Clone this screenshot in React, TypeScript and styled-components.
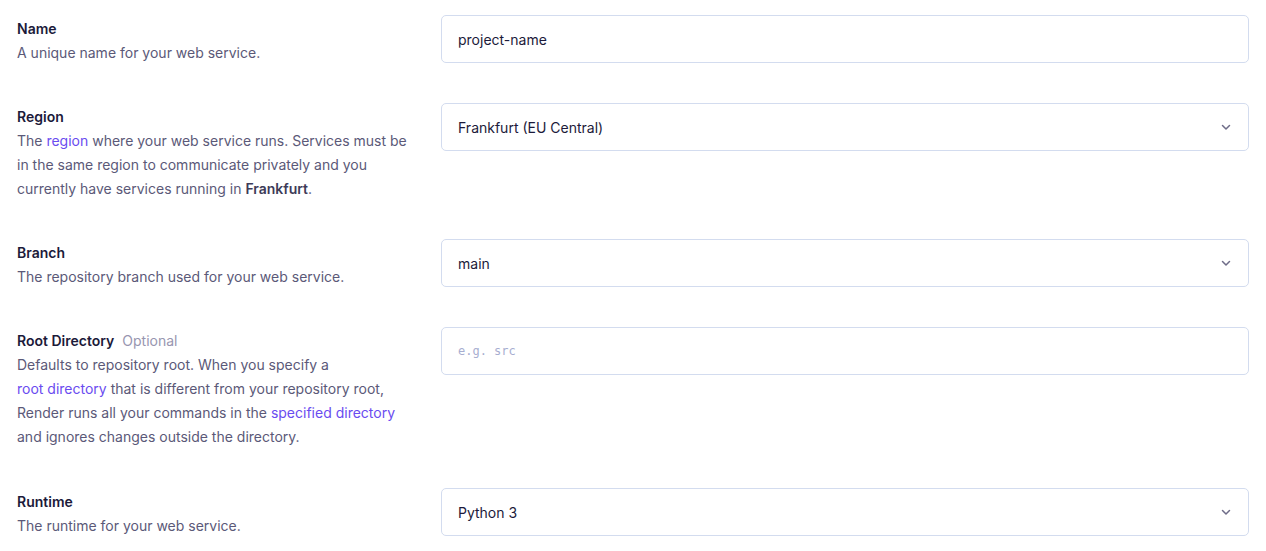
import React from "react";
import styled, { createGlobalStyle } from "styled-components";

const Global = createGlobalStyle`
  html, body { margin: 0; padding: 0; background: #ffffff; }
  body { font-family: "Inter", "Noto Sans", sans-serif; -webkit-font-smoothing: antialiased; }
  * { box-sizing: border-box; }
`;

const Page = styled.div`
  padding: 15px 17px 0 17px;
  display: flex;
  flex-direction: column;
  gap: 39px;
`;

const Row = styled.div`
  display: grid;
  grid-template-columns: 424px 808px;
  align-items: start;
`;

const Info = styled.div<{ $extra?: number }>`
  padding-top: 2px;
  margin-bottom: ${(p) => (p.$extra ? p.$extra - 1 : -1)}px;
  width: 390px;
`;

const Title = styled.div`
  font-size: 14px;
  line-height: 24px;
  font-weight: 600;
  color: #1c1a3a;
  display: flex;
  gap: 8px;
`;

const Optional = styled.span`
  font-weight: 400;
  color: #9896b0;
`;

const Desc = styled.div`
  font-size: 14px;
  line-height: 24px;
  color: #5b5978;
`;

const Link = styled.a`
  color: #6a4cf0;
  text-decoration: none;
  white-space: nowrap;
`;

const Strong = styled.span`
  font-weight: 600;
  color: #3d3b58;
`;

const Field = styled.div`
  height: 48px;
  border: 1px solid #d3dcef;
  border-radius: 5px;
  display: flex;
  align-items: center;
  justify-content: space-between;
  padding: 0 16px 0 16px;
  font-size: 14px;
  color: #1c1a3a;
`;

const Placeholder = styled.span`
  font-family: "DejaVu Sans Mono", "Liberation Mono", monospace;
  font-size: 12px;
  color: #a7aed0;
`;

const Chevron = () => (
  <svg width="12" height="12" viewBox="0 0 12 12" fill="none">
    <path d="M2.5 4.5 L6 8 L9.5 4.5" stroke="#6e6c88" strokeWidth="1.5" strokeLinecap="round" strokeLinejoin="round" />
  </svg>
);

export default function App() {
  return (
    <>
      <Global />
      <Page>
        <Row>
          <Info>
            <Title>Name</Title>
            <Desc>A unique name for your web service.</Desc>
          </Info>
          <Field>project-name</Field>
        </Row>
        <Row>
          <Info>
            <Title>Region</Title>
            <Desc>
              The <Link>region</Link> where your web service runs. Services must be in the same region to communicate
              privately and you currently have services running in <Strong>Frankfurt</Strong>.
            </Desc>
          </Info>
          <Field>
            Frankfurt (EU Central)
            <Chevron />
          </Field>
        </Row>
        <Row>
          <Info>
            <Title>Branch</Title>
            <Desc>The repository branch used for your web service.</Desc>
          </Info>
          <Field>
            main
            <Chevron />
          </Field>
        </Row>
        <Row>
          <Info $extra={1}>
            <Title>
              Root Directory <Optional>Optional</Optional>
            </Title>
            <Desc>
              Defaults to repository root. When you specify a <Link>root directory</Link> that is different from your
              repository root, Render runs all your commands in the <Link>specified directory</Link> and ignores changes
              outside the directory.
            </Desc>
          </Info>
          <Field>
            <Placeholder>e.g. src</Placeholder>
          </Field>
        </Row>
        <Row>
          <Info>
            <Title>Runtime</Title>
            <Desc>The runtime for your web service.</Desc>
          </Info>
          <Field>
            Python 3
            <Chevron />
          </Field>
        </Row>
      </Page>
    </>
  );
}
